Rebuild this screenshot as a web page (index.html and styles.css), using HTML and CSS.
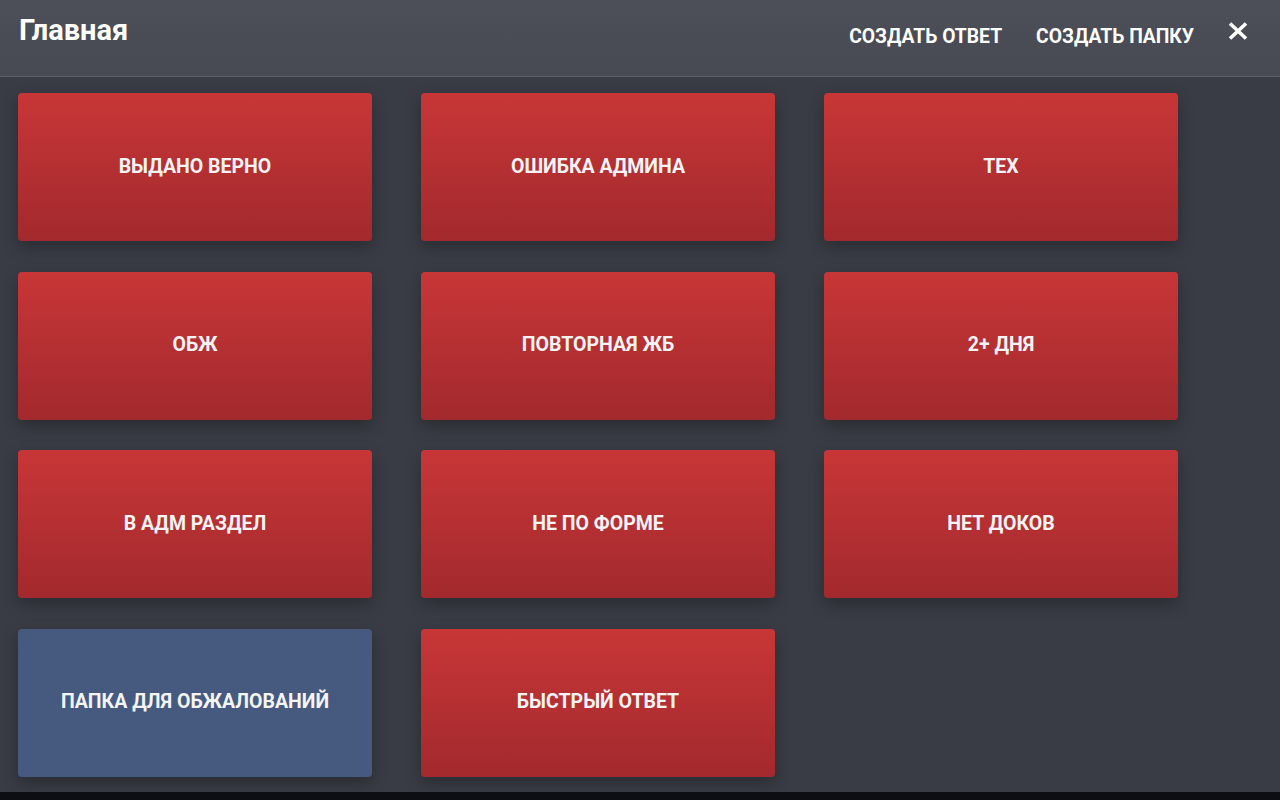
FILE: index.html
```html
<!DOCTYPE html>
<html lang="ru">
<head>
<meta charset="utf-8">
<title>Главная</title>
<link rel="stylesheet" href="styles.css">
</head>
<body>
<div class="app">
  <header class="topbar">
    <h1 class="title">Главная</h1>
    <nav class="actions">
      <button class="action">Создать ответ</button>
      <button class="action">Создать папку</button>
      <button class="close" aria-label="Закрыть">
        <svg width="20" height="20" viewBox="0 0 20 20"><path d="M2 2.5 L18 17.5 M18 2.5 L2 17.5" stroke="#ffffff" stroke-width="3.6" stroke-linecap="butt"/></svg>
      </button>
    </nav>
  </header>
  <main class="grid">
    <div class="tile red">Выдано верно</div>
    <div class="tile red">Ошибка админа</div>
    <div class="tile red">Тех</div>
    <div class="tile red">ОБЖ</div>
    <div class="tile red">Повторная ЖБ</div>
    <div class="tile red">2+ дня</div>
    <div class="tile red">В адм раздел</div>
    <div class="tile red">Не по форме</div>
    <div class="tile red">Нет доков</div>
    <div class="tile blue">Папка для обжалований</div>
    <div class="tile red">Быстрый ответ</div>
  </main>
</div>
</body>
</html>
```

FILE: styles.css
```css
html {
  background: #0c0e13;
  height: 100%;
}
body {
  margin: 0;
  font-family: Roboto, "Noto Sans", sans-serif;
}
.app {
  height: 792px;
  background: #393c44;
  display: flex;
  flex-direction: column;
  overflow: hidden;
}
.topbar {
  height: 76px;
  flex: 0 0 76px;
  background: linear-gradient(#4c4f58, #474a53);
  border-bottom: 1px solid #5e6169;
  display: flex;
  align-items: flex-start;
  justify-content: space-between;
  box-sizing: content-box;
}
.title {
  margin: 0;
  padding: 14px 0 0 19px;
  font-size: 29px;
  font-weight: 700;
  color: #ffffff;
  line-height: 32px;
}
.actions {
  display: flex;
  align-items: flex-start;
  padding: 25px 32px 0 0;
}
.action {
  background: none;
  border: 0;
  padding: 0;
  margin-right: 34px;
  color: #ffffff;
  font-family: Roboto, "Noto Sans", sans-serif;
  font-weight: 700;
  font-size: 19.3px;
  text-transform: uppercase;
  line-height: 24px;
}
.close {
  background: none;
  border: 0;
  padding: 0;
  width: 20px;
  height: 20px;
  display: flex;
  align-items: center;
  justify-content: center;
  margin-top: -4px;
}
.grid {
  display: grid;
  grid-template-columns: repeat(3, 354px);
  grid-auto-rows: 148px;
  column-gap: 49px;
  row-gap: 30.67px;
  padding: 16px 0 0 18px;
}
.tile {
  border-radius: 4px;
  display: flex;
  align-items: center;
  justify-content: center;
  padding-bottom: 2px;
  color: #f4f4f4;
  font-weight: 700;
  font-size: 19.5px;
  text-transform: uppercase;
  box-shadow: 0 6px 16px rgba(0, 0, 0, 0.28);
}
.red {
  background: linear-gradient(#c83637, #a2292d);
}
.blue {
  background: #465a80;
}
```
